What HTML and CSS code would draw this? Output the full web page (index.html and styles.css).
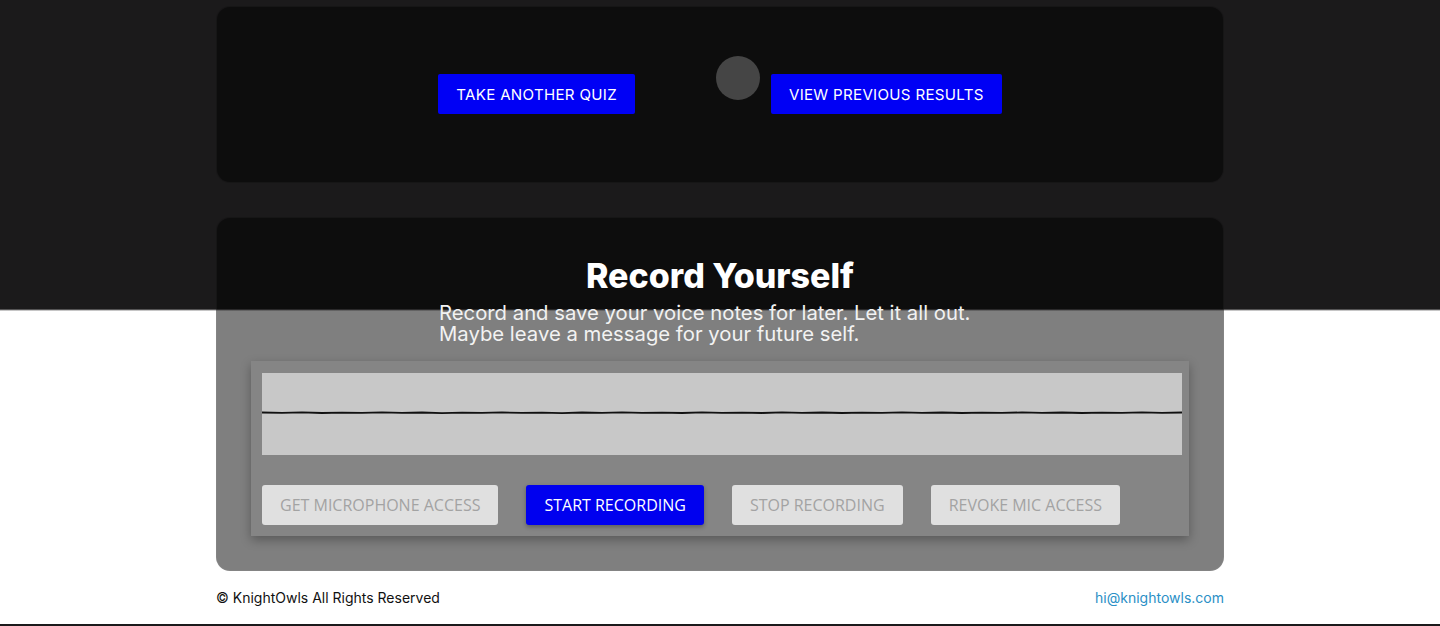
FILE: index.html
```html
<!DOCTYPE html>
<html lang="en">
<head>
<meta charset="utf-8">
<title>Record Yourself</title>
<link rel="stylesheet" href="styles.css">
</head>
<body>
<div class="page">
  <main class="container">
    <section class="card card-actions">
      <div class="action-row">
        <button class="btn-primary">TAKE ANOTHER QUIZ</button>
        <span class="cursor-dot"></span>
        <button class="btn-primary">VIEW PREVIOUS RESULTS</button>
      </div>
    </section>

    <section class="card card-record">
      <h2 class="record-title">Record Yourself</h2>
      <p class="record-sub">Record and save your voice notes for later. Let it all out.<br>Maybe leave a message for your future self.</p>
      <div class="recorder">
        <div class="wave">
          <svg width="920" height="82" viewBox="0 0 920 82" preserveAspectRatio="none">
            <path d="M0 39.5 L20 39.8 L40 39.4 L60 40 L80 39.6 L100 39.9 L120 39.3 L140 39.8 L160 39.5 L180 40.1 L200 39.6 L220 39.9 L240 39.4 L260 39.9 L280 39.6 L300 40.2 L320 39.5 L340 39.8 L360 39.3 L380 39.9 L400 39.6 L420 40 L440 39.4 L460 39.9 L480 39.6 L500 40 L520 39.4 L540 39.8 L560 39.5 L580 40 L600 39.6 L620 39.9 L640 39.3 L660 39.9 L680 39.5 L700 40 L720 39.6 L740 39.9 L760 39.4 L780 39.8 L800 39.5 L820 40 L840 39.6 L860 39.9 L880 39.4 L900 39.8 L920 39.5" fill="none" stroke="#111" stroke-width="1.8"/>
          </svg>
        </div>
        <div class="rec-buttons">
          <button class="rec-btn disabled">GET MICROPHONE ACCESS</button>
          <button class="rec-btn active">START RECORDING</button>
          <button class="rec-btn disabled">STOP RECORDING</button>
          <button class="rec-btn disabled">REVOKE MIC ACCESS</button>
        </div>
      </div>
    </section>

    <footer class="footer">
      <span class="copy">© KnightOwls All Rights Reserved</span>
      <a class="mail" href="#">hi@knightowls.com</a>
    </footer>
  </main>
  <div class="bottom-band"></div>
</div>
</body>
</html>
```

FILE: styles.css
```css
* { box-sizing: border-box; }

html, body {
  margin: 0;
  padding: 0;
  background: #ffffff;
}

body {
  font-family: "Inter", "Noto Sans", sans-serif;
  color: #000;
}

.page {
  background: linear-gradient(to bottom, #1b1a1b 0, #1b1a1b 309px, #ffffff 311px, #ffffff 100%);
  min-height: 626px;
  overflow: hidden;
}

.container {
  width: 1008px;
  margin: 0 auto;
  padding-top: 6px;
  display: flex;
  flex-direction: column;
}

.card {
  background: rgba(0, 0, 0, 0.5);
  border: 1px solid rgba(255, 255, 255, 0.04);
  border-radius: 14px;
}

.card-actions {
  height: 177px;
  padding-bottom: 1px;
  display: flex;
  align-items: center;
  justify-content: center;
}

.action-row {
  position: relative;
  display: flex;
  gap: 136px;
  align-items: center;
}

.btn-primary {
  height: 40px;
  padding: 0 18px;
  border: none;
  border-radius: 2px;
  background: #0000f5;
  color: #fff;
  font-family: "Inter", "Noto Sans", sans-serif;
  font-size: 15.1px;
  font-weight: 400;
  letter-spacing: 0.3px;
}

.cursor-dot {
  position: absolute;
  left: 278px;
  top: -18px;
  width: 44px;
  height: 44px;
  border-radius: 50%;
  background: #454545;
}

.card-record {
  margin-top: 34px;
  height: 354px;
  padding: 38px 34px 0 34px;
  display: flex;
  flex-direction: column;
  align-items: center;
}

.record-title {
  margin: 0;
  color: #fff;
  font-family: "Inter", "Noto Sans", sans-serif;
  font-weight: 800;
  font-size: 34px;
  line-height: 40px;
  letter-spacing: 0;
}

.record-sub {
  width: 562px;
  margin: 6px 0 0 0;
  color: #f2f2f2;
  font-size: 20.3px;
  line-height: 21px;
  font-weight: 400;
}

.recorder {
  align-self: stretch;
  margin-top: 17px;
  background: #858585;
  box-shadow: 0 4px 10px rgba(0, 0, 0, 0.3);
  padding: 12px 7px 11px 11px;
}

.wave {
  width: 920px;
  height: 82px;
  background: #c8c8c8;
}

.wave svg { display: block; }

.rec-buttons {
  margin-top: 30px;
  display: flex;
  gap: 28px;
}

.rec-btn {
  height: 40px;
  padding: 0 18px;
  border: none;
  border-radius: 3px;
  font-family: "Open Sans", "Noto Sans", sans-serif;
  font-size: 16px;
  letter-spacing: 0;
}

.rec-btn.disabled {
  background: #e0e0e0;
  color: #a3a3a3;
}

.rec-btn.active {
  background: #0000ef;
  color: #fff;
  box-shadow: 0 2px 4px rgba(0, 0, 0, 0.3);
}

.footer {
  height: 53px;
  display: flex;
  align-items: center;
  justify-content: space-between;
  font-size: 14px;
}

.copy { color: #111; }

.mail {
  color: #2a8fc6;
  text-decoration: none;
}

.bottom-band {
  height: 40px;
  background: #1b1a1b;
}
```
